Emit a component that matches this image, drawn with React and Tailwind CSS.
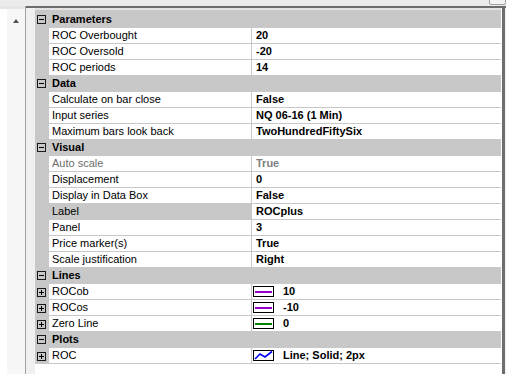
const rows = [
  { cat: "Parameters" },
  { name: "ROC Overbought", value: "20" },
  { name: "ROC Oversold", value: "-20" },
  { name: "ROC periods", value: "14" },
  { cat: "Data" },
  { name: "Calculate on bar close", value: "False" },
  { name: "Input series", value: "NQ 06-16 (1 Min)" },
  { name: "Maximum bars look back", value: "TwoHundredFiftySix" },
  { cat: "Visual" },
  { name: "Auto scale", value: "True", disabled: true },
  { name: "Displacement", value: "0" },
  { name: "Display in Data Box", value: "False" },
  { name: "Label", value: "ROCplus", selected: true },
  { name: "Panel", value: "3" },
  { name: "Price marker(s)", value: "True" },
  { name: "Scale justification", value: "Right" },
  { cat: "Lines" },
  { name: "ROCob", value: "10", expand: true, line: "#9400d3" },
  { name: "ROCos", value: "-10", expand: true, line: "#9400d3" },
  { name: "Zero Line", value: "0", expand: true, line: "#008000" },
  { cat: "Plots" },
  { name: "ROC", value: "Line; Solid; 2px", expand: true, plot: true },
];

const Glyph = ({ plus }) => (
  <div className="relative w-[9px] h-[9px] border border-[#1a1a1a] ml-[2px]">
    <div className="absolute left-[1px] top-[3px] w-[5px] h-[1px] bg-black" />
    {plus && <div className="absolute left-[3px] top-[1px] w-[1px] h-[5px] bg-black" />}
  </div>
);

const LineSwatch = ({ color }) => (
  <div className="w-[21px] h-[11px] border border-black bg-white flex items-center px-[1px]">
    <div className="w-full h-[2px]" style={{ backgroundColor: color }} />
  </div>
);

const PlotSwatch = () => (
  <svg width="21" height="11" viewBox="0 0 21 11" className="block">
    <rect x="0.5" y="0.5" width="20" height="10" fill="white" stroke="black" />
    <polyline points="2,9 7,4 12,7 19,1.5" fill="none" stroke="#0000ff" strokeWidth="1.6" />
  </svg>
);

const Row = ({ row }) => {
  if (row.cat) {
    return (
      <div className="h-[16px] flex items-center bg-[#c8c8c8] border-b border-[#c8c8c8]">
        <div className="w-[14px] flex items-center">
          <Glyph />
        </div>
        <span className="pl-[3px] font-bold text-black">{row.cat}</span>
      </div>
    );
  }
  return (
    <div className="h-[16px] flex">
      <div className="w-[14px] bg-[#c8c8c8] flex items-center">
        {row.expand && <Glyph plus />}
      </div>
      <div
        className={`w-[202px] flex items-center pl-[3px] border-b border-[#c8c8c8] ${
          row.selected ? "bg-[#c8c8c8]" : "bg-white"
        } ${row.disabled ? "text-[#6d6d6d]" : "text-black"}`}
      >
        {row.name}
      </div>
      <div className="w-[1px] bg-[#c8c8c8]" />
      <div
        className={`flex-1 flex items-center border-b border-[#c8c8c8] bg-white font-bold ${
          row.disabled ? "text-[#808080]" : "text-black"
        } ${row.line || row.plot ? "pl-[1px]" : "pl-[4px]"}`}
      >
        {row.line && <LineSwatch color={row.line} />}
        {row.plot && <PlotSwatch />}
        <span className={row.line || row.plot ? "ml-[9px]" : ""}>{row.value}</span>
      </div>
    </div>
  );
};

export default function App() {
  return (
    <div className="w-[506px] h-[374px] overflow-hidden bg-[#f0f0f0] flex flex-col font-['Liberation_Sans',Arial,sans-serif] text-[11px] leading-none">
      <div className="h-[6px] bg-[#ececec] relative">
        <div className="absolute right-0 top-[-4px] w-[17px] h-[9px] border border-[#a0a0a0] rounded-[2px] bg-[#f4f4f4]" />
      </div>
      <div className="flex flex-1">
        <div className="w-[25px] flex flex-col">
          <div className="h-[3px] bg-[#e6e6e6]" />
          <div className="flex flex-1">
            <div className="w-[7px] bg-white" />
            <div className="flex-1 bg-[#f7f7f7] flex justify-center pt-[10px]">
              <div className="w-0 h-0 border-l-[3.5px] border-r-[3.5px] border-b-[4px] border-l-transparent border-r-transparent border-b-[#505050]" />
            </div>
          </div>
        </div>
        <div className="w-[1px] bg-[#a0a0a0]" />
        <div className="flex-1 flex flex-col">
          <div className="h-[2px] bg-[#6d6d6d]" />
          <div className="flex flex-1">
            <div className="w-[9px] bg-[#f0f0f0]" />
            <div className="w-[466px] flex flex-col bg-white">
              <div className="h-[2px] bg-[#e3e3e3]" />
              <div className="h-[2px] bg-[#c8c8c8]" />
              {rows.map((row, i) => (
                <Row key={i} row={row} />
              ))}
            </div>
            <div className="w-[1px] bg-white" />
            <div className="w-[3px] bg-[#6d6d6d]" />
            <div className="w-[1px] bg-[#f0f0f0]" />
          </div>
        </div>
      </div>
    </div>
  );
}
